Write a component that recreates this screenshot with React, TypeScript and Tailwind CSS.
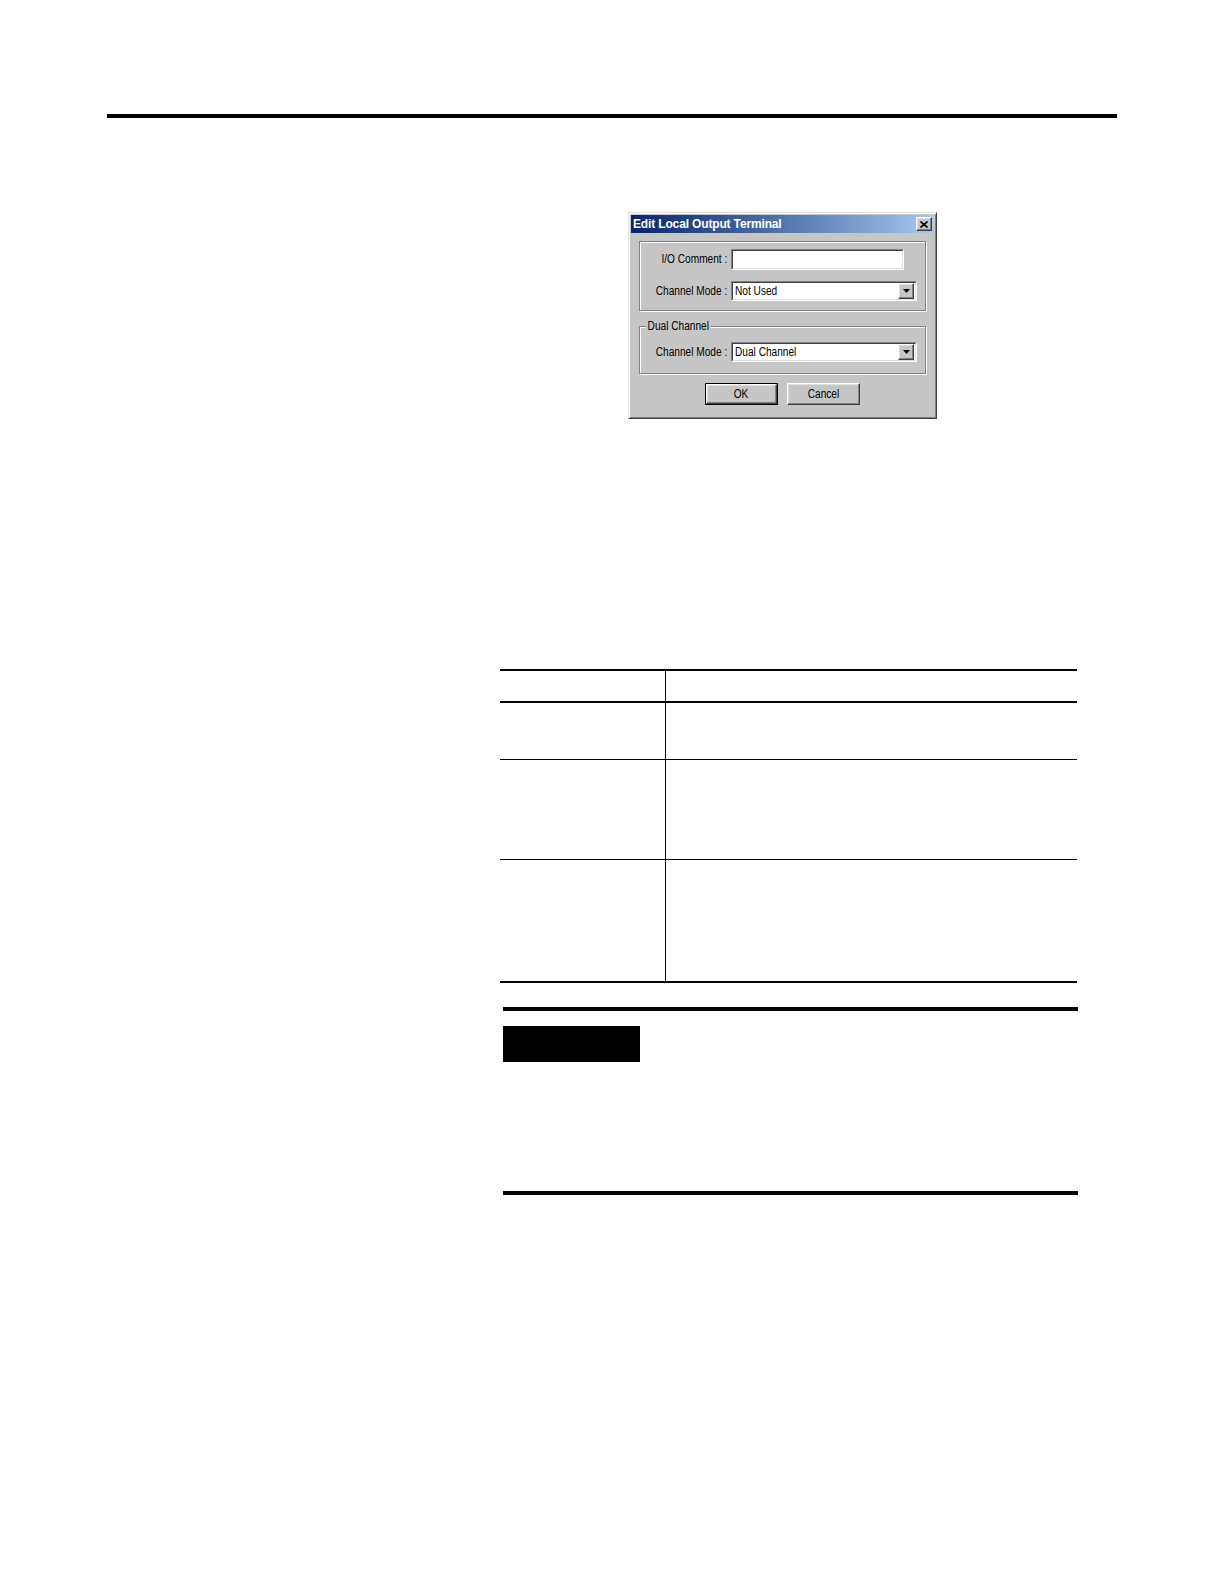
import React from "react";

const ui = "font-['Liberation_Sans',Arial,sans-serif] leading-none";

// Windows dialog text is a tall, narrow face; squeeze Liberation Sans to match.
function Narrow({
  children,
  origin = "origin-left",
  className = "",
}: {
  children: React.ReactNode;
  origin?: string;
  className?: string;
}) {
  return (
    <span
      className={`block whitespace-nowrap scale-x-[0.81] text-[12.5px] leading-none text-black ${origin} ${className}`}
    >
      {children}
    </span>
  );
}

function Raised({ className = "", children }: { className?: string; children?: React.ReactNode }) {
  return (
    <div
      className={`border border-t-white border-l-white border-r-[#404040] border-b-[#404040] bg-[#c6c6c6] shadow-[inset_-1px_-1px_0_#808080,inset_1px_1px_0_#dfdfdf] ${className}`}
    >
      {children}
    </div>
  );
}

function Combo({ value }: { value: string }) {
  return (
    <div className="flex h-[20px] w-[186px] items-stretch border border-t-[#808080] border-l-[#808080] border-r-white border-b-white">
      <div className="flex flex-1 items-center border border-t-[#404040] border-l-[#404040] border-r-[#dfdfdf] border-b-[#dfdfdf] bg-white">
        <div className="flex-1 pl-[2px]">
          <Narrow>{value}</Narrow>
        </div>
        <Raised className="mr-px flex h-[16px] w-[16px] items-center justify-center">
          <svg width="7" height="4" viewBox="0 0 7 4">
            <path d="M0 0h7L3.5 4z" fill="#000" />
          </svg>
        </Raised>
      </div>
    </div>
  );
}

function Field({ label, children }: { label: string; children: React.ReactNode }) {
  return (
    <div className="flex items-center">
      <div className="flex w-[91px] justify-end pr-[4px]">
        <Narrow origin="origin-right">{label}</Narrow>
      </div>
      {children}
    </div>
  );
}

function Dialog() {
  return (
    <div
      className={`flex h-[207px] w-[309px] flex-col border border-t-[#dfdfdf] border-l-[#dfdfdf] border-r-[#404040] border-b-[#404040] bg-[#c6c6c6] p-[2px] shadow-[inset_1px_1px_0_#fff,inset_-1px_-1px_0_#808080] ${ui}`}
    >
      <div className="flex h-[18px] items-center bg-gradient-to-r from-[#0a246a] to-[#a6caf0] pl-[2px] pr-[2px]">
        <span className="flex-1 text-[12px] font-bold leading-none tracking-[-0.15px] text-white">
          Edit Local Output Terminal
        </span>
        <Raised className="flex h-[14px] w-[16px] items-center justify-center">
          <svg width="8" height="7" viewBox="0 0 8 7">
            <path d="M0.5 0.5l7 6M7.5 0.5l-7 6" stroke="#000" strokeWidth="1.6" />
          </svg>
        </Raised>
      </div>

      <div className="mx-[8px] mt-[8px] flex h-[70px] flex-col gap-[11px] border border-[#808080] pt-[7px] shadow-[inset_1px_1px_0_#fff,1px_1px_0_#fff]">
        <Field label="I/O Comment :">
          <div className="h-[21px] w-[173px] border border-t-[#808080] border-l-[#808080] border-r-white border-b-white">
            <div className="h-full w-full border border-t-[#404040] border-l-[#404040] border-r-[#dfdfdf] border-b-[#dfdfdf] bg-white" />
          </div>
        </Field>
        <Field label="Channel Mode :">
          <Combo value="Not Used" />
        </Field>
      </div>

      <div className="relative mx-[8px] mt-[15px] flex h-[48px] flex-col border border-[#808080] pt-[15px] shadow-[inset_1px_1px_0_#fff,1px_1px_0_#fff]">
        <div className="absolute left-[6px] top-[-7px] flex">
          <Narrow className="bg-[#c6c6c6] px-[2px]">Dual Channel</Narrow>
        </div>
        <Field label="Channel Mode :">
          <Combo value="Dual Channel" />
        </Field>
      </div>

      <div className="mt-[9px] flex justify-center gap-[9px]">
        <div className="border border-black">
          <Raised className="flex h-[20px] w-[71px] items-center justify-center">
            <Narrow origin="origin-center">OK</Narrow>
          </Raised>
        </div>
        <Raised className="flex h-[22px] w-[73px] items-center justify-center">
          <Narrow origin="origin-center">Cancel</Narrow>
        </Raised>
      </div>
    </div>
  );
}

const rows = [57, 100, 121];

export default function App() {
  return (
    <div className="h-[1584px] w-[1224px] bg-white">
      <div className="pl-[107px] pt-[114px]">
        <div className="h-[4px] w-[1010px] bg-black" />
      </div>

      <div className="ml-[628px] mt-[94px]">
        <Dialog />
      </div>

      <div className="ml-[500px] mt-[250px] w-[577px] border-y-2 border-black">
        <div className="flex h-[32px] border-b-2 border-black">
          <div className="w-[166px] border-r border-black" />
          <div className="flex-1" />
        </div>
        {rows.map((h, i) => (
          <div
            key={i}
            className={`flex ${i < rows.length - 1 ? "border-b border-black" : ""}`}
            style={{ height: h }}
          >
            <div className="w-[166px] border-r border-black" />
            <div className="flex-1" />
          </div>
        ))}
      </div>

      <div className="ml-[503px] mt-[24px] w-[575px]">
        <div className="h-[4px] bg-black" />
        <div className="mt-[15px] h-[36px] w-[137px] bg-black" />
        <div className="mt-[129px] h-[4px] bg-black" />
      </div>
    </div>
  );
}
